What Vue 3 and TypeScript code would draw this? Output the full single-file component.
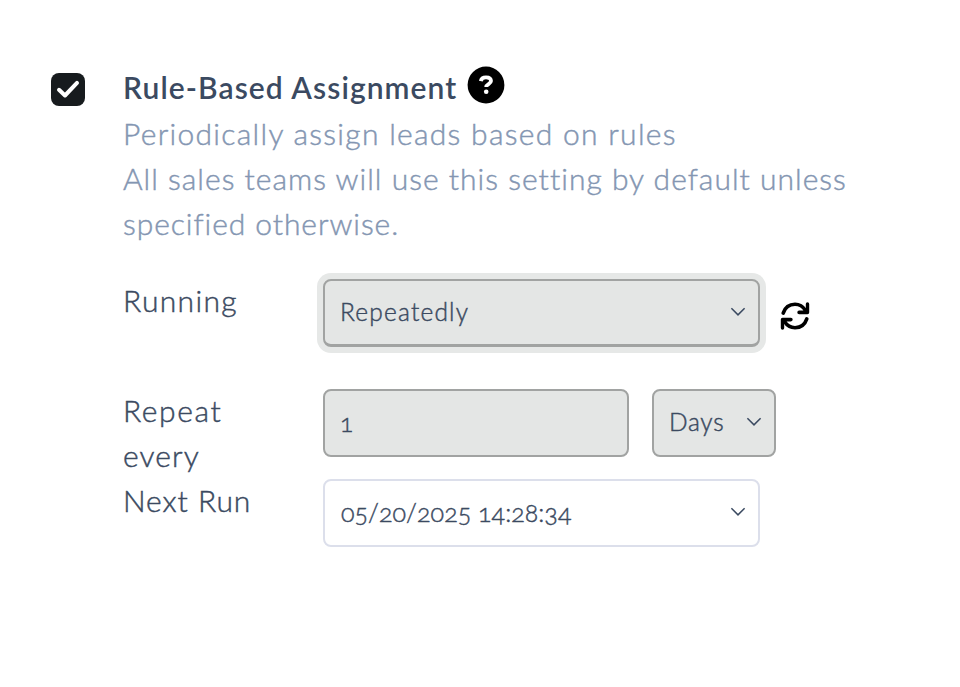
<script setup lang="ts">
import { ref } from 'vue'

const enabled = ref(true)
const mode = ref('Repeatedly')
const interval = ref('1')
const unit = ref('Days')
const nextRun = ref('05/20/2025 14:28:34')
</script>

<template>
  <main class="setting">
    <button class="checkbox" type="button" role="checkbox" :aria-checked="enabled" @click="enabled = !enabled">
      <svg v-if="enabled" width="34" height="33" viewBox="0 0 34 33">
        <path d="M8 16.8 14 22.5 26 9.9" fill="none" stroke="#fff" stroke-width="4" stroke-linecap="round" stroke-linejoin="round" />
      </svg>
    </button>

    <section class="content">
      <header class="heading">
        <h1 class="title">Rule-Based Assignment</h1>
        <svg class="help" width="38" height="38" viewBox="0 0 38 38">
          <circle cx="19" cy="19" r="18.4" fill="#000" />
          <path d="M13.8 15.1C14.3 12.3 16.3 11.4 19 11.4c2.9 0 5 1.3 5 3.7 0 3.1-4.8 3-4.8 6" fill="none" stroke="#fff" stroke-width="3.8" />
          <circle cx="19.2" cy="25.8" r="2.3" fill="#fff" />
        </svg>
      </header>
      <p class="description">
        <span class="line first">Periodically assign leads based on rules</span>
        <span class="line second">All sales teams will use this setting by default unless</span>
        <span class="line third">specified otherwise.</span>
      </p>

      <div class="row running">
        <span class="label">Running</span>
        <button type="button" class="field wide filled focused">
          <span>{{ mode }}</span>
          <svg class="chevron" width="16" height="10" viewBox="0 0 16 10"><path d="M1.4 1.3 8 7.9 14.6 1.3" /></svg>
        </button>
        <svg class="refresh" width="30" height="28" viewBox="0 0 30 28">
          <g fill="none" stroke="#000" stroke-width="3.6" stroke-linecap="round">
            <path d="M3.2 11.1C5.1 5.4 9.6 2.3 15 2.3c4.5 0 7.9 2.1 10.6 6.2" />
            <path d="M26.8 16.9C24.9 22.6 20.4 25.7 15 25.7c-4.5 0-7.9-2.1-10.6-6.2" />
          </g>
          <path d="M25.8 2q0-1.7 1.7-1.7T29.2 2v8.5q0 1.7-1.7 1.7h-8.4q-1.8 0-1.8-1.8t1.8-1.8h3.7l3-1Z" />
          <path d="M4.2 26q0 1.7-1.7 1.7T.8 26v-8.5q0-1.7 1.7-1.7h8.4q1.8 0 1.8 1.8t-1.8 1.8H7.2l-3 1Z" />
        </svg>
      </div>

      <div class="row repeat">
        <span class="label spaced">Repeat<br><span class="every">every</span></span>
        <input v-model="interval" class="field number filled" aria-label="Repeat every">
        <button type="button" class="field unit filled">
          <span>{{ unit }}</span>
          <svg class="chevron" width="16" height="10" viewBox="0 0 16 10"><path d="M1.4 1.3 8 7.9 14.6 1.3" /></svg>
        </button>
      </div>

      <div class="row">
        <span class="label next">Next Run</span>
        <button type="button" class="field wide date">
          <span>{{ nextRun }}</span>
          <svg class="chevron" width="16" height="10" viewBox="0 0 16 10"><path d="M1.4 1.3 8 7.9 14.6 1.3" /></svg>
        </button>
      </div>
    </section>
  </main>
</template>

<style>
body {
  background: #fff;
}
</style>

<style scoped>
.setting {
  box-sizing: border-box;
  display: flex;
  align-items: flex-start;
  min-height: 687px;
  padding: 64px 51px 0;
  color: #3b4a61;
  font-family: Lato, "Open Sans", sans-serif;
  font-size: 30px;
  font-weight: 300;
  line-height: 45px;
  font-variant-numeric: oldstyle-nums;
  -webkit-text-stroke: 0.45px currentColor;
}
.checkbox {
  width: 34px;
  height: 33px;
  margin: 9px 38px 0 0;
  padding: 0;
  border: 0;
  border-radius: 8px;
  background: #171b1e;
}
.checkbox svg {
  display: block;
}
.content {
  width: 740px;
}
.heading {
  display: flex;
  height: 47px;
}
.title {
  margin: 0;
  width: 344px;
  font-size: 30px;
  font-weight: 600;
  letter-spacing: 1.08px;
  line-height: 46px;
  white-space: nowrap;
  -webkit-text-stroke: 0;
}
.help {
  margin-top: 1.5px;
}
.description {
  margin: 0;
  color: #8496b2;
}
.line {
  display: block;
  white-space: nowrap;
}
.first {
  letter-spacing: 1.29px;
}
.second {
  letter-spacing: 1.02px;
}
.third {
  letter-spacing: 0.93px;
}
.row {
  display: flex;
  align-items: flex-start;
}
.running {
  margin-top: 32px;
  height: 110px;
}
.repeat {
  height: 90px;
}
.label {
  flex: 0 0 200px;
  letter-spacing: 1.35px;
}
.next {
  letter-spacing: 0.95px;
}
.spaced {
  letter-spacing: 1.6px;
}
.every {
  letter-spacing: 1.1px;
}
.field {
  box-sizing: border-box;
  display: flex;
  align-items: center;
  justify-content: space-between;
  height: 68px;
  margin-top: 1px;
  padding: 0 12px 2px 15px;
  border: 2px solid #dcdfeb;
  border-radius: 8px;
  outline: 0;
  background: #fff;
  color: #3b4a61;
  font: inherit;
  font-size: 24.5px;
  font-variant-numeric: oldstyle-nums;
  letter-spacing: 1.2px;
  -webkit-text-stroke: inherit;
}
.filled {
  border-color: #a1a3a2;
  background: #e4e6e5;
}
.focused {
  border-bottom-width: 3px;
  box-shadow: 0 0 0 6px #e6e8e7;
}
.wide {
  width: 437px;
}
.number {
  width: 306px;
  margin-right: 23px;
}
.unit {
  width: 124px;
  padding-bottom: 3px;
  letter-spacing: 0.7px;
}
.date {
  padding-left: 16px;
  font-size: 25px;
  letter-spacing: 0.05px;
}
.chevron {
  fill: none;
  stroke: #3b4a61;
  stroke-width: 1.5;
  -webkit-text-stroke: 0;
}
.refresh {
  margin: 24px 0 0 20px;
}
</style>
